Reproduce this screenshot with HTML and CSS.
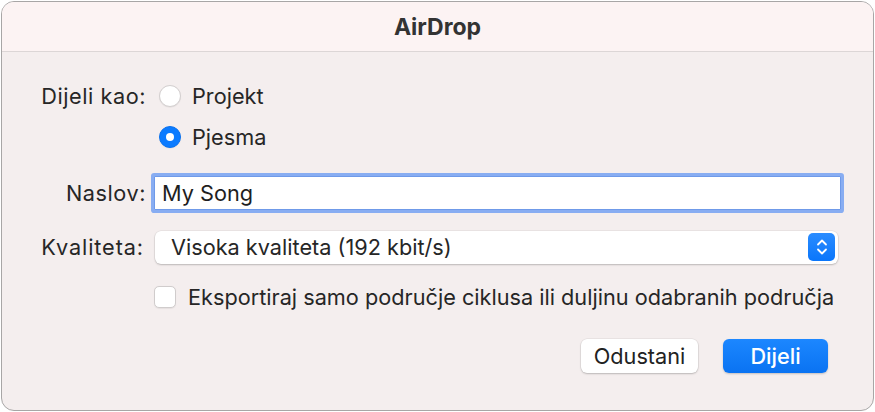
FILE: index.html
```html
<!DOCTYPE html>
<html lang="hr">
<head>
<meta charset="utf-8">
<title>AirDrop</title>
<link rel="stylesheet" href="styles.css">
</head>
<body>
<div class="window">
  <div class="titlebar">AirDrop</div>
  <div class="content">
    <div class="row row-radio1">
      <div class="label">Dijeli kao:</div>
      <div class="control">
        <span class="radio"></span><span class="opt">Projekt</span>
      </div>
    </div>
    <div class="row row-radio2">
      <div class="label"></div>
      <div class="control">
        <span class="radio checked"></span><span class="opt">Pjesma</span>
      </div>
    </div>
    <div class="row row-field">
      <div class="label">Naslov:</div>
      <div class="control">
        <div class="field">My Song</div>
      </div>
    </div>
    <div class="row row-popup">
      <div class="label label-narrow">Kvaliteta:</div>
      <div class="control">
        <div class="popup">
          <span class="popup-text">Visoka kvaliteta (192 kbit/s)</span>
          <span class="popup-arrows">
            <svg width="14" height="20" viewBox="0 0 14 20"><path d="M3 7.5 L7 3.5 L11 7.5" fill="none" stroke="#fff" stroke-width="1.8" stroke-linecap="round" stroke-linejoin="round"/><path d="M3 12.5 L7 16.5 L11 12.5" fill="none" stroke="#fff" stroke-width="1.8" stroke-linecap="round" stroke-linejoin="round"/></svg>
          </span>
        </div>
      </div>
    </div>
    <div class="row row-check">
      <div class="label"></div>
      <div class="control">
        <span class="checkbox"></span><span class="check-text">Eksportiraj samo područje ciklusa ili duljinu odabranih područja</span>
      </div>
    </div>
    <div class="buttons">
      <div class="btn btn-cancel">Odustani</div>
      <div class="btn btn-default">Dijeli</div>
    </div>
  </div>
</div>
</body>
</html>
```
FILE: styles.css
```css
html, body {
  margin: 0;
  padding: 0;
  background: #ffffff;
}
body {
  font-family: Inter, "Liberation Sans", sans-serif;
  color: #262626;
  font-size: 21.7px;
}
.window {
  margin: 1px;
  width: 871px;
  height: 408px;
  border: 1px solid #a8a6a6;
  border-radius: 13px;
  background: #f4eeee;
  overflow: hidden;
  display: flex;
  flex-direction: column;
}
.titlebar {
  height: 48px;
  flex: none;
  background: #fcf3f3;
  border-bottom: 1px solid #dcd6d6;
  display: flex;
  align-items: center;
  justify-content: center;
  font-weight: 700;
  font-size: 23px;
  color: #333;
  padding-top: 1px;
  box-sizing: content-box;
}
.content {
  padding-top: 29px;
  display: flex;
  flex-direction: column;
}
.row {
  display: grid;
  grid-template-columns: 144px 1fr;
  column-gap: 8px;
  align-items: center;
}
.label {
  text-align: right;
  letter-spacing: 0.55px;
}
.label-narrow {
  padding-right: 2px;
  letter-spacing: 0.9px;
}
.control {
  display: flex;
  align-items: center;
}
.row-radio1 { height: 30px; }
.row-radio2 { height: 30px; margin-top: 11px; }
.row-field { height: 40px; margin-top: 21px; }
.row-popup { height: 34px; margin-top: 17px; }
.row-check { height: 24px; margin-top: 20px; }

.radio {
  width: 20px;
  height: 20px;
  border-radius: 50%;
  background: #fff;
  border: 1px solid #d3cfcf;
  box-shadow: 0 0.5px 1px rgba(0,0,0,0.08);
  margin-left: 5px;
  margin-right: 11px;
  flex: none;
  box-sizing: content-box;
}
.radio.checked {
  background: #0b7bff;
  border-color: #0a72f0;
  position: relative;
}
.radio.checked::after {
  content: "";
  position: absolute;
  left: 6px;
  top: 6px;
  width: 8px;
  height: 8px;
  border-radius: 50%;
  background: #fff;
}
.field {
  width: 687px;
  height: 34px;
  box-sizing: border-box;
  background: #fff;
  border: 1px solid #6f9ae9;
  box-shadow: 0 0 0 3px #88adf2;
  border-radius: 1px;
  padding-left: 7px;
  display: flex;
  align-items: center;
  color: #1e1e1e;
}
.popup {
  margin-left: 1px;
  width: 683px;
  height: 33px;
  box-sizing: border-box;
  background: #fff;
  border-radius: 6px;
  box-shadow: 0 0 0 0.5px rgba(0,0,0,0.08), 0 1px 2px rgba(0,0,0,0.2);
  display: flex;
  align-items: center;
  justify-content: space-between;
  padding-left: 16px;
  padding-right: 3px;
}
.popup-arrows {
  width: 27px;
  height: 28px;
  border-radius: 5px;
  background: linear-gradient(#2a8cff, #0a76fb);
  display: flex;
  align-items: center;
  justify-content: center;
}
.checkbox {
  width: 22px;
  height: 22px;
  box-sizing: border-box;
  border-radius: 5px;
  background: #fff;
  border: 1px solid #d0cccc;
  box-shadow: 0 0.5px 1px rgba(0,0,0,0.06);
  margin-right: 12px;
  flex: none;
}
.buttons {
  margin-top: 31px;
  display: flex;
  justify-content: flex-end;
  gap: 25px;
  padding-right: 45px;
}
.btn {
  height: 34px;
  box-sizing: border-box;
  border-radius: 6px;
  display: flex;
  align-items: center;
  justify-content: center;
}
.btn-cancel {
  width: 117px;
  background: #fff;
  box-shadow: 0 0 0 0.5px rgba(0,0,0,0.08), 0 1px 2px rgba(0,0,0,0.2);
  color: #222;
}
.btn-default {
  width: 105px;
  background: linear-gradient(#1c87ff, #0a73f2);
  box-shadow: 0 1px 2px rgba(0,0,0,0.2);
  color: #fff;
  font-weight: 500;
}
```
